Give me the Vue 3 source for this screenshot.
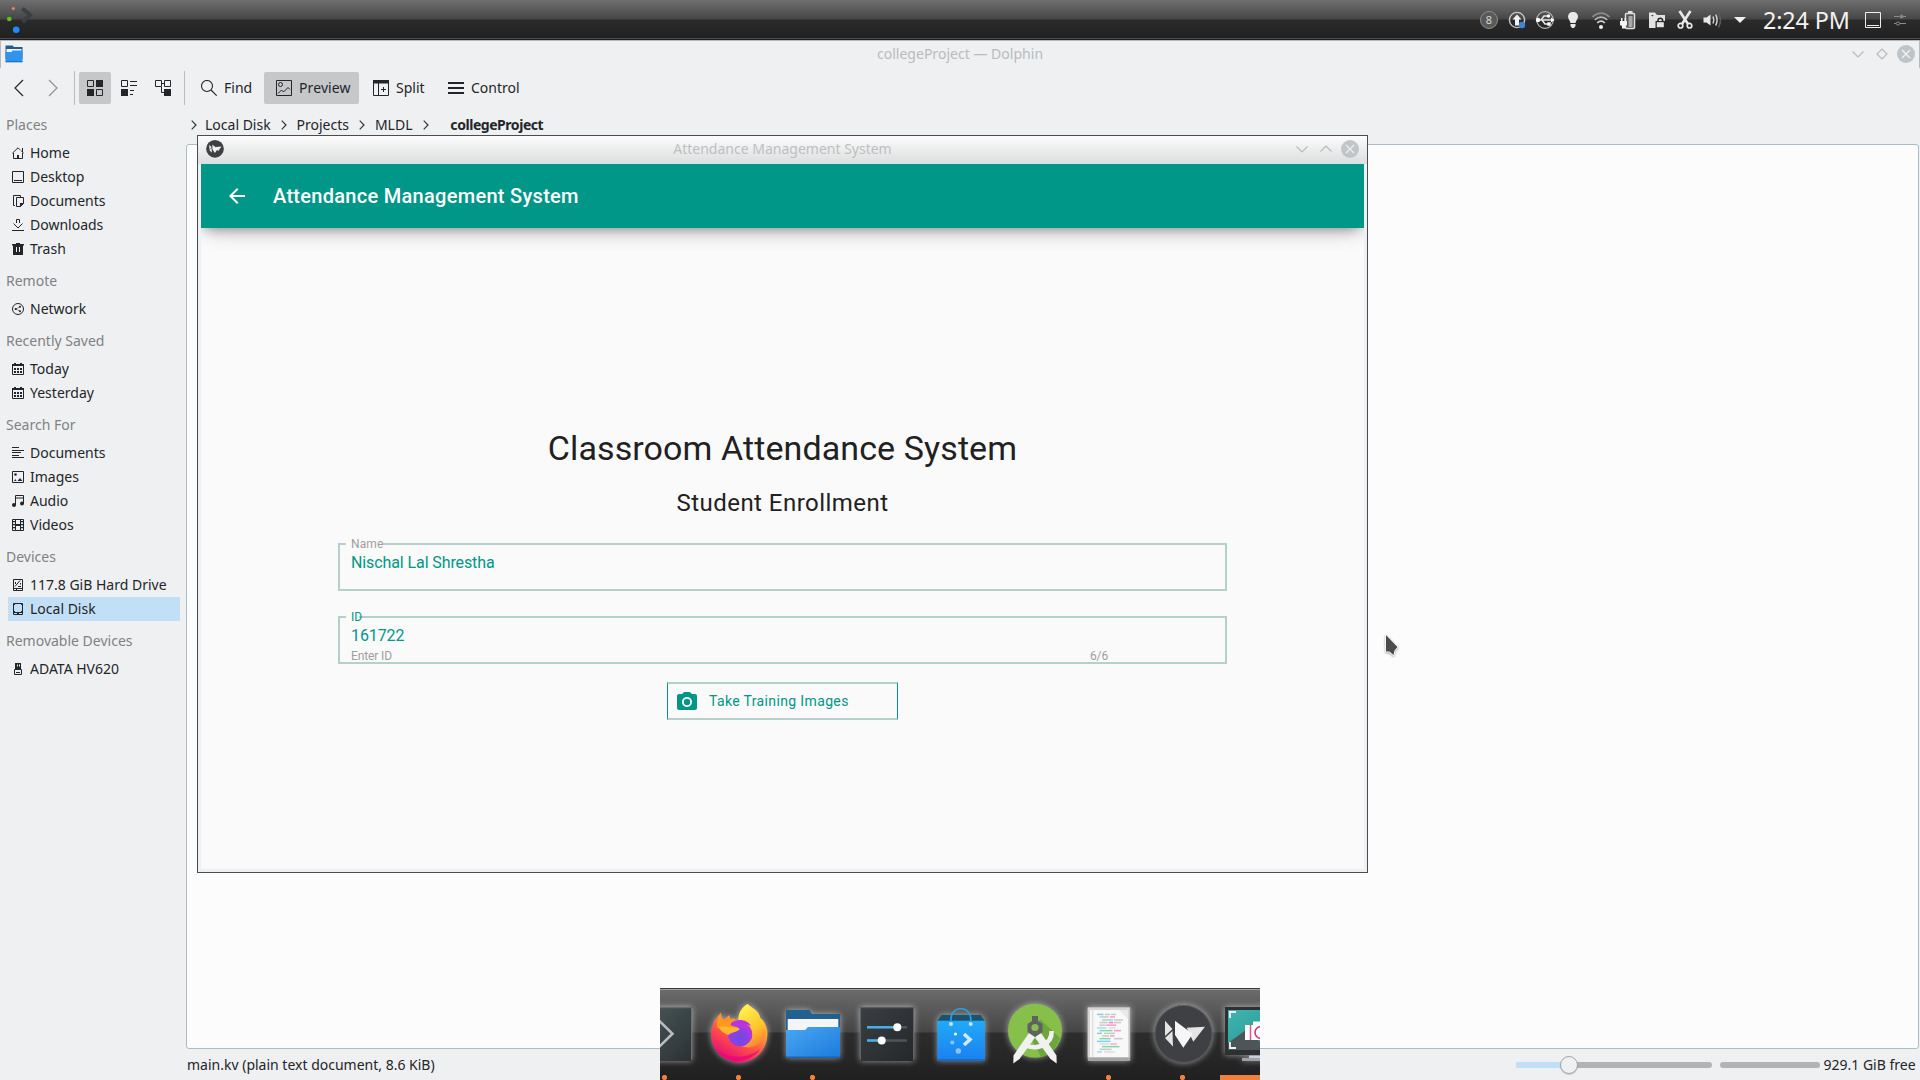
<script setup>
const sections = [
  { title: 'Places', items: [['Home', 'home'], ['Desktop', 'desktop'], ['Documents', 'docs'], ['Downloads', 'down'], ['Trash', 'trash']] },
  { title: 'Remote', items: [['Network', 'net']] },
  { title: 'Recently Saved', items: [['Today', 'cal'], ['Yesterday', 'cal']] },
  { title: 'Search For', items: [['Documents', 'lines'], ['Images', 'image'], ['Audio', 'audio'], ['Videos', 'video']] },
  { title: 'Devices', items: [['117.8 GiB Hard Drive', 'hdd'], ['Local Disk', 'disk']] },
  { title: 'Removable Devices', items: [['ADATA HV620', 'usb']] },
]

// Coloured strokes on the text editor icon: x, y, width, colour
const code = [
  [25, 26.5, 6.5, '#7fcfee'], [33, 26.5, 5, '#c8c8c8'], [39, 26.5, 5, '#c8c8c8'],
  [27.5, 29, 9, '#c8c8c8'], [38, 29, 5, '#f29ad2'],
  [30, 32, 11, '#9fdcc0'], [42, 32, 9, '#c8c8c8'],
  [27.5, 34.6, 8, '#c8c8c8'], [36.7, 34.6, 4.5, '#f07cc8'], [42, 34.6, 7, '#c8c8c8'],
  [27.5, 37.2, 6, '#c8c8c8'], [34.2, 37.2, 10, '#f29ad2'],
  [25, 40, 9.5, '#a5dcf2'], [36.5, 40, 7, '#dcdcdc'],
  [27.5, 42.7, 13, '#7fd9ab'], [42, 42.7, 7, '#f29ad2'],
  [25, 45.4, 5, '#7fcfee'], [32, 45.4, 11, '#c8c8c8'],
  [30, 48, 7, '#c8c8c8'], [38, 48, 4.5, '#f29ad2'],
  [27.5, 50.7, 11, '#7fd9ab'], [42, 50.7, 8.5, '#c8c8c8'],
  [25, 53.4, 13.5, '#7fcfee'],
  [27.5, 56, 9.5, '#dcdcdc'], [38, 56, 7, '#f3aedb'],
  [30, 58.7, 17.5, '#7fd9ab'],
  [27.5, 61.4, 12, '#c8c8c8'],
  [25, 64, 5, '#a5dcf2'], [32, 64, 11, '#dcdcdc'],
]
</script>

<template>
  <div class="screen">
    <header class="panel">
      <svg class="launcher" width="40" height="40" viewBox="0 0 40 40">
        <path d="M22.5 8.500l7.500 6.500-7.500 7" fill="none" stroke="#3a3f42" stroke-width="4" />
        <circle cx="13.300" cy="8.500" r="1.600" fill="#f47d63" />
        <circle cx="9.300" cy="19" r="2.300" fill="#5fc40e" />
        <circle cx="16.200" cy="29.800" r="3.300" fill="#1d8df5" />
      </svg>
      <div class="tray">
        <span class="cell badge"><i>8</i></span>
        <svg class="cell" viewBox="-14 -14 28 28">
          <circle r="7.600" fill="none" stroke="#c9c9c9" stroke-width="1.400" />
          <path d="M0-5.500L4.500-.5H2V5.500H-2V-.5H-4.500z" fill="#f2f2f2" />
          <circle cx="5" cy="5" r="3.200" fill="#3f84d6" />
        </svg>
        <svg class="cell" viewBox="-14 -14 28 28" fill="none" stroke="#e6e6e6">
          <circle r="8.300" stroke="#b5b5b5" stroke-width="1.200" />
          <path d="M-8 0H7M-4 0L-1-4H3M-3 0L0 4H3" stroke-width="1.500" />
          <circle cx="-7" r="2.200" fill="#fff" stroke="none" /><circle cx="3.500" cy="-4" r="1.700" fill="#fff" stroke="none" />
          <rect x="2.300" y="2.300" width="3.400" height="3.400" fill="#fff" stroke="none" /><path d="M6-2.400L9.500 0 6 2.400z" fill="#fff" stroke="none" />
        </svg>
        <svg class="cell" viewBox="-14 -14 28 28" fill="#e8e8e8">
          <path d="M0-8C-3-8-5-6-5-3.500-5-1-3 .5-2.500 3H2.500C3 .5 5-1 5-3.500 5-6 3-8 0-8zM-2.500 4H2.500V6L1 8H-1L-2.500 6z" />
        </svg>
        <svg class="cell" viewBox="-14 -14 28 28" fill="none" stroke-width="1.700">
          <path d="M-8.500-3.200Q0-10.500 8.500-3.200" stroke="#8d8d8d" /><path d="M-6.200-.2Q0-5.600 6.200-.2" stroke="#b5b5b5" />
          <path d="M-3.800 2.800Q0-.6 3.800 2.800" stroke="#d5d5d5" /><circle cy="7" r="2" fill="#f0f0f0" />
        </svg>
        <svg class="cell" viewBox="-13 -14 28 28">
          <rect x="-2.500" y="-6.500" width="9" height="15" rx="1" fill="#555" stroke="#e0e0e0" stroke-width="1.500" />
          <rect x=".5" y="-4" width="4" height="11" fill="#a9a9a9" /><rect x="0" y="-9" width="4.500" height="2" fill="#e0e0e0" />
          <path d="M-7-2h1.500v3h2v-3H-2V1H-1V5L-3 6V8.500H-6V6L-8 5V1h1z" fill="#f4f4f4" />
        </svg>
        <svg class="cell" viewBox="-14 -14 28 28">
          <path d="M-8-7.500H-2L0-5H8V8H-8z" fill="#e2e2e2" /><path d="M-6-5L-3.500-5-4.500-3.500z" fill="#333" />
          <rect x="-1.500" y="1" width="9.500" height="7.500" fill="#2a2a2a" /><rect x="-.2" y="2.200" width="7" height="5" fill="#e6e6e6" />
          <path d="M1 2V.5a2.300 2.300 0 0 1 4.600 0V2" fill="none" stroke="#2a2a2a" stroke-width="1.600" />
        </svg>
        <svg class="cell" viewBox="-14 -14 28 28" fill="none" stroke="#e9e9e9">
          <path d="M-5.500-9L3 4M5.500-9L-3 4" stroke-width="2.600" />
          <circle cx="-4.500" cy="5.700" r="2.300" stroke-width="1.700" /><circle cx="4.500" cy="5.700" r="2.300" stroke-width="1.700" />
        </svg>
        <svg class="cell" viewBox="-13.500 -14 28 28" fill="none" stroke="#d2d2d2" stroke-width="1.500">
          <path d="M-9-2.500H-6L-2-5.500V5.500L-6 2.500H-9z" fill="#e9e9e9" stroke="none" />
          <path d="M.5-3.500Q2.200 0 .5 3.500M3.200-5.500Q6 0 3.200 5.500" /><path d="M6-7.500Q10 0 6 7.500" stroke="#5d5d5d" />
        </svg>
        <svg class="cell" viewBox="-13 -14 28 28"><path d="M-6-3H6L0 3z" fill="#f0f0f0" /></svg>
      </div>
      <time class="clock">2:24 PM</time>
      <svg class="peek" width="52" height="40" viewBox="0 0 52 40" fill="none">
        <path d="M3.500 12.500h15v15h-15z" stroke="#eee" /><path d="M5 25.500h12" stroke="#eee" />
        <g stroke="#8a8a8a"><path d="M32 16.500h5.500m3 0H44" /><path d="M32 23.500h2m4 0h6" /><circle cx="36" cy="23.500" r="1.600" /><circle cx="39.500" cy="16.500" r="1.500" fill="#8a8a8a" /></g>
      </svg>
    </header>

    <div class="titlebar">
      <svg class="title-folder" width="18" height="18" viewBox="0 0 18 18">
        <path d="M.5.500H7.500L9 2H17.500V14H.5z" fill="#1d5f93" /><path d="M1.500 4H16.500V9H1.500z" fill="#f5f8fa" />
        <path d="M.5 7H6.500L7.500 5.500H17.500V17H.5z" fill="#3193ea" /><path d="M.5 16.300H17.500V17.300H.5z" fill="#1767b4" />
      </svg>
      <span>collegeProject — Dolphin</span>
      <svg class="title-buttons" width="72" height="24" viewBox="0 0 72 24" fill="none" stroke="#b6bbbf" stroke-width="1.200">
        <path d="M4.500 9.500L10 15l5.500-5.500M34 7l5 5-5 5-5-5z" /><circle cx="58" cy="12" r="9" fill="#bfc4c8" stroke="none" />
        <path d="M54 8l8 8M62 8l-8 8" stroke="#f3f4f5" />
      </svg>
    </div>

    <nav class="toolbar">
      <svg class="back" width="50" height="24" viewBox="0 0 50 24" fill="none" stroke-width="1.200">
        <path d="M13 4L5 12l8 8" stroke="#232629" /><path d="M39 4l8 8-8 8" stroke="#8f9294" />
      </svg>
      <i class="sep first"></i>
      <span class="tool pressed">
        <svg width="16" height="16" viewBox="0 0 16 16"><path d="M.5.500h6v6h-6zM9.500 9.500h6v6h-6z" fill="none" stroke="#232629" /><path d="M9 0h7v7H9zM0 9h7v7H0z" fill="#232629" /></svg>
      </span>
      <span class="tool">
        <svg width="16" height="16" viewBox="0 0 16 16"><path d="M.5.500h6v6h-6z" fill="none" stroke="#232629" /><path d="M0 9h7v7H0zM9 1h7v1H9zM9 5h7v1H9zM9 10h4v1H9zM9 14h3v1H9z" fill="#232629" /></svg>
      </span>
      <span class="tool last">
        <svg width="16" height="16" viewBox="0 0 16 16"><path d="M.5.500h6v6h-6zM9.500.500h6v6h-6zM7 3.500h2M6.500 7v5.500H9" fill="none" stroke="#232629" /><path d="M9 9h7v7H9z" fill="#232629" /></svg>
      </span>
      <i class="sep"></i>
      <span class="action find">
        <svg width="16" height="16" viewBox="0 0 16 16" fill="none" stroke="#232629" stroke-width="1.100"><circle cx="6" cy="6" r="5.500" /><path d="M10 10l5.700 5.700" /></svg>Find
      </span>
      <span class="action pressed preview">
        <svg width="16" height="16" viewBox="0 0 16 16" fill="none" stroke="#232629"><path d="M.5.500h15v15H.5zM2 13.500L5.500 10l2 2L12 7.500l2 2" /><circle cx="4.500" cy="4.500" r="2" /></svg>Preview
      </span>
      <span class="action split">
        <svg width="16" height="16" viewBox="0 0 16 16" fill="none" stroke="#232629"><path d="M.5.500h15v15H.5zM5.500 3v13M8 9.500h5M10.500 7v5" /><path d="M0 0h16v3.500H0z" fill="#232629" stroke="none" /></svg>Split
      </span>
      <span class="action control">
        <svg width="16" height="16" viewBox="0 0 16 16"><path d="M0 2h16v2H0zM0 7h16v2H0zM0 12h16v2H0z" fill="#232629" /></svg>Control
      </span>
    </nav>

    <main class="body">
      <aside class="places">
        <section v-for="s in sections" :key="s.title">
          <h4>{{ s.title }}</h4>
          <div v-for="[label, icon] in s.items" :key="label" class="place" :class="{ selected: label === 'Local Disk' }">
            <svg width="12" height="12" viewBox="0 0 12 12" fill="none" stroke="#232629">
              <template v-if="icon === 'home'"><path d="M.3 6.300L6 .8l2 2M10.500 1v4M9 3.500l2.700 2.800M1.500 6v5.500h9V6" /><path d="M5 8h2v4H5z" fill="#232629" stroke="none" /></template>
              <path v-else-if="icon === 'desktop'" d="M.5.500h11v11H.5zM2 9.500h8" />
              <template v-else-if="icon === 'docs'"><path d="M3 10.500H1.500V.5h7V2M4.500 2.500h7v6l-3 3h-4z" /><path d="M8 8h4l-4 4z" fill="#232629" stroke="none" /></template>
              <path v-else-if="icon === 'down'" d="M0 11.500h12M4.500 4V.5h3V4M1.500 4.500L6 9l4.500-4.500" />
              <template v-else-if="icon === 'trash'"><path d="M0 1h4V0h4v1h4v1.500h-1V12H1V2.500H0z" fill="#232629" stroke="none" /><path d="M4.500 4v5M7.500 4v5" stroke="#eff0f1" /></template>
              <template v-else-if="icon === 'net'"><circle cx="6" cy="6" r="5.500" /><g fill="#232629" stroke="none"><circle cx="3.700" cy="6" r="1.100" /><circle cx="8" cy="3.800" r="1" /><circle cx="8" cy="8.200" r="1" /></g><path d="M3.700 6L8 3.800M3.700 6L8 8.200" stroke-width=".5" /></template>
              <template v-else-if="icon === 'cal'"><path d="M.5 2v9.500h11V2" /><path d="M0 1h2V0h2v1h4V0h2v1h2v2H0zM2 5h2v2H2zM5 5h2v2H5zM8 5h2v2H8zM2 8h2v2H2zM5 8h2v2H5zM8 8h2v2H8z" fill="#232629" stroke="none" /></template>
              <path v-else-if="icon === 'lines'" d="M0 .5h7M0 3.500h12M0 5.500h9M0 8.500h7M0 10.500h12" />
              <template v-else-if="icon === 'image'"><path d="M.5.500h11v11H.5z" /><circle cx="3.500" cy="3.500" r="1.300" fill="#232629" stroke="none" /><path d="M2 10l1.500-2 1 2zM5.500 10l2.500-3 2.500 3z" fill="#232629" stroke="none" /></template>
              <template v-else-if="icon === 'audio'"><path d="M3.500 10V.5h8V9M3.500 3h8" /><circle cx="2" cy="10" r="2" fill="#232629" stroke="none" /><circle cx="10" cy="8.500" r="2" fill="#232629" stroke="none" /></template>
              <template v-else-if="icon === 'video'"><path d="M.5.500h11v11H.5zM3.500 0v12M8.500 0v12" /><path d="M3 5h6v2H3zM0 2h3v1.200H0zM0 5h3v1.200H0zM0 8h3v1.200H0zM9 2h3v1.200H9zM9 5h3v1.200H9zM9 8h3v1.200H9z" fill="#232629" stroke="none" /></template>
              <path v-else-if="icon === 'hdd'" d="M1.500.500h9v11h-9zM1.500 9.500h9M3 7.500l5-6M3.500 3v2M6 7.500h3M8.500 4v1.500M4 10.500h1" />
              <path v-else-if="icon === 'disk'" d="M1.500.500h9v11h-9zM1.500 9.500h9M5 10.500h2M2 1.500h1M9 1.500h1M2 8.500h1M9 8.500h1" />
              <template v-else><path d="M2.500 6.500h7v5h-7zM4 9.500h4" /><path d="M3 0h6v6H3z" fill="#232629" stroke="none" /><path d="M5.500 1.500v2M7.500 1.500v2" stroke="#eff0f1" /></template>
            </svg>
            <span>{{ label }}</span>
          </div>
        </section>
      </aside>

      <div class="main-col">
        <div class="crumbs">
          <svg class="c1" width="6" height="10" viewBox="0 0 6 10"><path d="M.7.700L5 5 .7 9.300" /></svg><span>Local Disk</span>
          <svg class="c2" width="6" height="10" viewBox="0 0 6 10"><path d="M.7.700L5 5 .7 9.300" /></svg><span>Projects</span>
          <svg class="c2" width="6" height="10" viewBox="0 0 6 10"><path d="M.7.700L5 5 .7 9.300" /></svg><span>MLDL</span>
          <svg class="c2" width="6" height="10" viewBox="0 0 6 10"><path d="M.7.700L5 5 .7 9.300" /></svg><b>collegeProject</b>
        </div>
        <div class="view"></div>
        <footer class="status">
          <span class="info">main.kv (plain text document, 8.6 KiB)</span>
          <div class="zoom"><i></i><b></b></div>
          <div class="capacity"></div>
          <span class="free">929.1 GiB free</span>
        </footer>
      </div>
    </main>

    <section class="window">
      <div class="wtitle">
        <svg class="wlogo" width="18" height="18" viewBox="8 17 59 59">
          <circle cx="37.500" cy="46" r="29" fill="#3e4043" /><path d="M19 32.700L26.500 41 19 48zM19 50l7.500-7 .5 15.500zM29 32.700L46.700 46l-9.400 13.700L29 47zM40.700 39.700L59 38.700 47.300 53.700z" fill="#f2f2f2" />
        </svg>
        <span>Attendance Management System</span>
        <svg class="wbuttons" width="72" height="24" viewBox="0 0 72 24" fill="none" stroke="#b6bbbf" stroke-width="1.200">
          <path d="M4.500 9.500L10 15l5.500-5.500M28.500 14.500L34 9l5.500 5.500" /><circle cx="58" cy="12" r="9" fill="#c1c5c8" stroke="none" />
          <path d="M54 8l8 8M62 8l-8 8" stroke="#eeeff0" />
        </svg>
      </div>
      <div class="app">
        <div class="appbar">
          <svg width="16" height="16" viewBox="4 4 16 16"><path d="M20 11H7.830l5.590-5.590L12 4l-8 8 8 8 1.410-1.410L7.830 13H20z" fill="#fff" /></svg>
          <span>Attendance Management System</span>
        </div>
        <h1>Classroom Attendance System</h1>
        <h2>Student Enrollment</h2>
        <div class="field name">
          <label>Name</label>
          <span class="value">Nischal Lal Shrestha</span>
        </div>
        <div class="field id">
          <label>ID</label>
          <span class="value">161722</span>
          <div class="hints"><small class="hint">Enter ID</small><small class="count">6/6</small></div>
        </div>
        <div class="train">
          <svg width="20" height="18" viewBox="2 2 20 18"><path d="M9 2L7.170 4H4c-1.100 0-2 .9-2 2v12c0 1.100.9 2 2 2h16c1.100 0 2-.9 2-2V6c0-1.100-.9-2-2-2h-3.170L15 2H9zm3 15c-2.760 0-5-2.240-5-5s2.240-5 5-5 5 2.240 5 5-2.240 5-5 5z" fill="#009688" /><circle cx="12" cy="12" r="3.200" fill="#009688" /></svg>
          <span>Take Training Images</span>
        </div>
      </div>
    </section>

    <div class="dock">
      <svg class="dock-icon running" viewBox="0 0 74 92">
        <defs><linearGradient id="term" x1="0" y1="0" x2="1" y2="1"><stop offset="0" stop-color="#4b5a5b" /><stop offset="1" stop-color="#2b3134" /></linearGradient></defs>
        <g class="glow"><rect x="10" y="19" width="54" height="54" rx="1" fill="url(#term)" /></g>
        <path d="M10.500 19.700H63.500V72" fill="none" stroke="#6a7475" /><path d="M30 31.500L44.500 45.700 30 60" fill="none" stroke="#b9bdbd" stroke-width="2.600" />
      </svg>
      <svg class="dock-icon running" viewBox="0 0 74 92">
        <defs>
          <linearGradient id="fx1" x1=".85" y1="0" x2=".3" y2="1"><stop offset="0" stop-color="#fff44f" /><stop offset=".35" stop-color="#ffa436" /><stop offset=".65" stop-color="#ff4f4a" /><stop offset="1" stop-color="#e5077b" /></linearGradient>
          <linearGradient id="fx2" x1=".3" y1="0" x2=".7" y2="1"><stop offset="0" stop-color="#fff44f" /><stop offset=".6" stop-color="#ffc32c" /><stop offset="1" stop-color="#ff7a32" /></linearGradient>
          <radialGradient id="fx3" cx=".5" cy=".65" r=".6"><stop offset="0" stop-color="#6a4be0" /><stop offset="1" stop-color="#a838e8" /></radialGradient>
        </defs>
        <g class="glow">
          <path d="M19 25C14 29 9 38 9 46a28.200 28.200 0 0 0 56.400 1C66 38 61 32 58 30 58 23 49 19 45.500 16 39 20 37 26 36.500 32L28 31 27.500 27 20 33z" fill="url(#fx1)" />
          <path d="M45.500 16C38 21 36 27 36.500 33 44 32 51 38 50 46c0 7-5 11-11 12 10 4 20-1 24-10 3-9-1-15-5-18C58 25 49 21 45.500 16z" fill="url(#fx2)" />
          <circle cx="38" cy="46.500" r="12" fill="url(#fx3)" />
          <path d="M28 36C34 30 45 31 49 38 43 35 42 38 46 38 51 42 52 50 47 54 49 48 46 42 42 40 37 38 31 38 28 39z" fill="#b833e1" />
          <path d="M19 25C16 29 14 35 15.500 40 18 40 23 41 26.500 45 31 45 35 43 37.500 41.500 37 38 31 39 28.500 37 29 34 31 32 33.500 31 29 30 27 31 25 33 20 32 19 29 19 25z" fill="#ff991d" />
          <path d="M16.500 39C22 38 33 39 37.500 41 36 44 29 44 26.500 47 21 45 18 42 16.500 39z" fill="#ffb52d" />
          <path d="M13 60C24 71 45 72 58 61 49 76 23 78 13 60z" fill="#e5077b" fill-opacity=".75" />
        </g>
      </svg>
      <svg class="dock-icon running" viewBox="0 0 74 92">
        <defs><linearGradient id="fold" x1="0" y1="0" x2="1" y2="1"><stop offset="0" stop-color="#4ba6f2" /><stop offset="1" stop-color="#1b7bdc" /></linearGradient></defs>
        <g class="glow"><path d="M10 22H33.300L36 26H64V60H10z" fill="#20618f" /><path d="M11.700 31H62.300V45H11.700z" fill="#f5f5f5" /><path d="M10 42H29L32 39H64V70H10z" fill="url(#fold)" /></g>
        <path d="M10 69.300H64" stroke="#1765b3" stroke-width="1.400" />
      </svg>
      <svg class="dock-icon" viewBox="0 0 74 92">
        <defs><linearGradient id="sett" x1="0" y1="0" x2="1" y2="1"><stop offset="0" stop-color="#3b3e42" /><stop offset="1" stop-color="#25282b" /></linearGradient></defs>
        <g class="glow"><rect x="10" y="19" width="54" height="54" rx="1" fill="url(#sett)" /></g>
        <path d="M10.500 72V19.700H63.500V72" fill="none" stroke="#606468" />
        <path d="M17 39.300H57M17 52.500H57" stroke="#515559" stroke-width="2.400" /><path d="M17 39.300H46M17 52.500H31" stroke="#43b0e8" stroke-width="2.400" />
        <circle cx="47.300" cy="39.300" r="4" fill="#fff" /><circle cx="31.700" cy="52.500" r="4" fill="#fff" />
      </svg>
      <svg class="dock-icon" viewBox="0 0 74 92">
        <defs><linearGradient id="bag" x1="0" y1="0" x2="0" y2="1"><stop offset="0" stop-color="#20aaf8" /><stop offset="1" stop-color="#1b80f0" /></linearGradient></defs>
        <g class="glow"><path d="M17.500 27H56.500L61 33H13.300z" fill="#19536f" /><rect x="13.300" y="32.700" width="47.700" height="40" fill="url(#bag)" /></g>
        <path d="M13.300 72H61" stroke="#1a66b8" stroke-width="1.400" />
        <path d="M27 35V29.500a9.900 9.900 0 0 1 19.700 0V35" fill="none" stroke="#2a9fdc" stroke-width="1.700" />
        <g fill="#c3e2fb"><circle cx="27" cy="36" r="2" /><circle cx="46.700" cy="36" r="2" /><circle cx="31.500" cy="46" r="1.500" fill="#fff" /><circle cx="28.300" cy="54.500" r="2" fill="#8cc6f8" /><circle cx="34.300" cy="63" r="2.700" fill="#8cc6f8" /></g>
        <path d="M40 46l6 5.500-6 5.500" fill="none" stroke="#cfe8fc" stroke-width="3.600" />
      </svg>
      <svg class="dock-icon" viewBox="0 0 74 92">
        <g class="glow"><circle cx="37" cy="42.700" r="27" fill="#86c04a" /></g>
        <path d="M42 31L62 50C58 62 50 68 43 69L32 48z" fill="#6fa63c" />
        <path d="M31 45L15.500 67.500 15.300 75.500 21.500 71 37.500 49zM43 45L58.500 67.500 58.700 75.500 52.500 71 36.500 49z" fill="#f1f1f1" />
        <path d="M27 57C37 62 54 58 53.700 43" fill="none" stroke="#f1f1f1" stroke-width="4.600" />
        <path d="M34 28h6v5l4.500 3v8L37 49l-7.500-5v-8l4.500-3z" fill="#5f6163" /><circle cx="37" cy="39.500" r="3.600" fill="#86c04a" />
      </svg>
      <svg class="dock-icon running" viewBox="0 0 74 92">
        <g class="glow"><rect x="15.700" y="19" width="42.600" height="54" rx="1" fill="#a5a5a5" /></g>
        <rect x="15.700" y="19.500" width="42" height="50" fill="#d5d5d5" /><rect x="18" y="22" width="38" height="47" fill="#f8f8f8" /><path d="M20.700 22v47" stroke="#d5d5d5" />
        <path d="M47 22h9v9z" fill="#e8e8e8" />
        <rect v-for="(l, i) in code" :key="i" :x="l[0]" :y="l[1] - 0.8" :width="l[2]" height="1.500" :fill="l[3]" />
      </svg>
      <svg class="dock-icon running" viewBox="0 0 74 92">
        <g class="glow"><circle cx="37.500" cy="46" r="29" fill="#3e4043" /></g>
        <circle cx="37.500" cy="46" r="28.500" fill="none" stroke="#5b5d60" />
        <path d="M19 32.700L26.500 41 19 48zM19 50l7.500-7 .5 15.500zM40.700 39.700L59 38.700 47.300 53.700z" fill="#e4e4e4" /><path d="M29 32.700L46.700 46l-9.400 13.700L29 47z" fill="#f6f6f6" />
      </svg>
      <svg class="dock-icon active" viewBox="0 0 74 92">
        <defs><linearGradient id="scr" x1="0" y1="0" x2="1" y2="1"><stop offset="0" stop-color="#43b3b4" /><stop offset=".6" stop-color="#2aa295" /></linearGradient></defs>
        <g class="glow"><rect x="5" y="19" width="64" height="48" fill="#2d3134" /><path d="M22 70H52v3H22z" fill="#9aa3ac" /></g>
        <path d="M8 22H66V62H8z" fill="url(#scr)" /><path d="M8 55L26 42 40 54V62H8z" fill="#4c5558" />
        <path d="M10 30V24H16M10 54V60H16" fill="none" stroke="#f2f2f2" stroke-width="1.800" />
        <path d="M25 37H33V33.500H45V37V52H25z" fill="#fff" /><circle cx="41" cy="44.500" r="6" fill="none" stroke="#d0396f" stroke-width="1.600" /><path d="M30.500 37v15" stroke="#e0557b" stroke-width="1.500" />
        <path d="M29 67.500H45V70H29z" fill="#c9cfd4" />
      </svg>
    </div>

    <svg class="cursor" width="20" height="28" viewBox="0 0 20 28">
      <path d="M3 3V19.500H6.500L10.500 23 11.500 18.500 14.500 15z" fill="#4a4b4d" stroke="#fff" stroke-width="1.600" stroke-linejoin="round" paint-order="stroke" />
    </svg>
  </div>
</template>

<style>
body { margin: 0; overflow: hidden; }
</style>

<style scoped>
.screen {
  position: relative; width: 1920px; height: 1080px; overflow: hidden; display: flex; flex-direction: column;
  background: #eff0f1; color: #232629; font: 14px/24px "Noto Sans", sans-serif;
}
svg { display: block; flex: none; }
.panel {
  flex: none; height: 41px; box-sizing: border-box; display: flex; align-items: flex-start;
  background: linear-gradient(#6f6f6f 0, #464646 19px, #2b2b2b 20px, #212121 38px, #4c4c4c 38px, #4c4c4c 39px, #1d1d1d 39px, #1d1d1d 40px, #b5babd 40px);
}
.tray { margin-left: auto; display: flex; margin-right: 8px; }
.cell { width: 28px; height: 40px; flex: none; }
.badge { display: flex; align-items: center; justify-content: center; }
.badge i {
  width: 16px; height: 16px; border: 1px solid #8e8e8e; border-radius: 50%; background: #595959; color: #d5d5d5;
  font: normal 11px/16px "Noto Sans", sans-serif; text-align: center;
}
.clock { width: 99px; font-size: 23.300px; line-height: 40px; letter-spacing: -.1px; color: #f2f2f2; white-space: nowrap; }
.peek { margin-right: 6px; }

.titlebar { flex: none; height: 27px; display: flex; justify-content: center; position: relative; color: #b9bbbd; line-height: 26px; border-left: 1px solid #b5babd; border-right: 1px solid #b5babd; letter-spacing: .02px; }
.title-folder { position: absolute; left: 4px; top: 4px; }
.title-buttons { position: absolute; right: -1px; top: 1px; }

.toolbar { flex: none; height: 40px; display: flex; align-items: center; }
.back { margin-left: 10px; margin-right: 14px; }
.sep { width: 1px; height: 34px; background: #b9bbbd; margin-right: 4px; }
.tool { width: 32px; height: 32px; display: flex; align-items: center; justify-content: center; margin-right: 2px; border-radius: 2px; }
.tool.last { margin-right: 5px; }
.pressed { background: #c5c7c9; }
.action { height: 32px; display: flex; align-items: center; gap: 7px; border-radius: 2px; }
.find { margin-left: 12px; width: 63px; }
.preview { width: 83px; padding-left: 12px; letter-spacing: .1px; }
.split { margin-left: 14px; width: 75px; }

.body { flex: 1; display: flex; min-height: 0; }
.places { width: 186px; flex: none; padding-top: 1px; margin-top: -4px; white-space: nowrap; }
.places h4 { margin: 0; height: 32px; padding: 4px 0 0 6px; font: inherit; line-height: 32px; color: #7f8285; }
.place { height: 24px; margin: 0 6px 0 8px; padding-left: 4px; display: flex; align-items: center; gap: 6px; }
.selected { background: #c2e0f5; }
.main-col { flex: 1; display: flex; flex-direction: column; min-width: 0; }
.crumbs { height: 36px; display: flex; align-items: center; padding-left: 5px; box-sizing: border-box; line-height: 34px; padding-bottom: 2px; }
.crumbs path { fill: none; stroke: #34373a; stroke-width: 1.200; }
.crumbs span { margin-left: 8px; }
.crumbs .c2 { margin-left: 10.500px; }
.crumbs span + .c2 + span { margin-left: 9.400px; }
.crumbs b { margin-left: 21.400px; letter-spacing: -.45px; }
.view { flex: 1; background: #fcfcfc; border: 1px solid #a9bcc7; border-radius: 3px; margin-right: 1px; }
.status { height: 31px; display: flex; align-items: center; line-height: 31px; padding-right: 4px; }
.info { margin-left: 1px; }
.zoom { margin-left: auto; width: 196px; height: 6px; border-radius: 3px; background: #b1b3b5; position: relative; }
.zoom i { display: block; width: 53px; height: 6px; border-radius: 3px; background: #c2e0f5; }
.zoom b { position: absolute; left: 44px; top: -6px; width: 16px; height: 16px; border: 1px solid #a3a5a7; border-radius: 50%; background: #eff0f1; box-shadow: 0 1px 1px rgba(0, 0, 0, .15); }
.capacity { margin: 0 4px 0 8px; width: 100px; height: 6px; border-radius: 3px; background: #b1b3b5; }
.free { width: 92.500px; white-space: nowrap; }

.window {
  position: absolute; left: 197px; top: 135px; width: 1171px; height: 738px; box-sizing: border-box;
  border: 1px solid #474d54; background: #eff0f1; display: flex; flex-direction: column;
}
.wtitle { flex: none; height: 28px; display: flex; justify-content: center; position: relative; background: linear-gradient(#fcfcfc, #dcddde); color: #bcbfc1; line-height: 25px; }
.wlogo { position: absolute; left: 8px; top: 4px; }
.wbuttons { position: absolute; right: 3px; top: 1px; }
.app { width: 1163px; height: 705px; margin: 0 3px; background: #fafafa; overflow: hidden; display: flex; flex-direction: column; align-items: center; font-family: Roboto, sans-serif; }
.appbar {
  align-self: stretch; flex: none; height: 64px; box-sizing: border-box; padding-left: 28px; display: flex; align-items: center; gap: 28px;
  background: #009688; color: #fff; font-weight: 500; font-size: 20px; letter-spacing: .29px; box-shadow: 0 6px 22px -4px rgba(0, 0, 0, .22), 0 5px 12px -5px rgba(0, 0, 0, .4);
}
h1, h2 { margin: 0; font-weight: 400; color: #212121; white-space: nowrap; }
h1 { margin-top: 200px; font-size: 34px; line-height: 40px; letter-spacing: .1px; }
h2 { margin: 19px 0 24px; font-size: 24px; line-height: 32px; letter-spacing: .46px; }
.field {
  flex: none; position: relative; width: 889px; height: 48px; box-sizing: border-box; border: 2px solid #b3d0cb; border-top: 0;
  padding: 10px 0 0 11px; color: #009688; margin-bottom: 25px; display: flex; flex-direction: column;
}
.field::before, .field::after { content: ""; position: absolute; top: 0; height: 2px; background: #b3d0cb; }
.field::before { left: -2px; width: 8px; }
.field::after { left: 43px; right: -2px; }
.field.id::after { left: 19px; }
.field.id { margin-bottom: 18px; }
.field label { position: absolute; left: 11px; top: -6px; font-size: 12px; line-height: 14px; color: #9e9e9e; letter-spacing: .1px; z-index: 1; }
.field.id label { color: #009688; }
.value { font-size: 16px; line-height: 20px; letter-spacing: -.1px; }
.hints { display: flex; line-height: 14px; margin-top: 3px; color: #9e9e9e; }
.hints small { font-size: 12px; letter-spacing: -.12px; }
.hint { width: 739px; }
.train {
  flex: none; width: 231px; height: 38px; box-sizing: border-box; border: solid; border-width: 2px 1px; border-color: #b3d0cb #009688;
  padding-left: 9px; display: flex; align-items: center; gap: 12px; color: #009688; letter-spacing: .36px;
}

.dock {
  position: absolute; left: 660px; top: 988px; width: 600px; height: 92px; overflow: hidden; display: flex;
  background: linear-gradient(#3b3b3b 0, #3b3b3b 1px, #b9b9b9 1px, #8a8a8a 2px, #6b6b6b 2px, #454545 44px, #2d2d2d 45px, #202020 92px);
}
.dock-icon { width: 74px; height: 92px; }
.dock-icon:first-child { margin-left: -32px; }
.glow { filter: drop-shadow(0 0 3px rgba(255, 255, 255, .55)); }
.running { background: radial-gradient(circle at 36.500px 89.500px, #f0803c 2.200px, transparent 3px); }
.active { background: linear-gradient(#f0803c, #f0803c) 0 87px / 74px 5px no-repeat; }
.cursor { position: absolute; left: 1383px; top: 632px; filter: drop-shadow(0 1px 1px rgba(0, 0, 0, .35)); }
</style>
